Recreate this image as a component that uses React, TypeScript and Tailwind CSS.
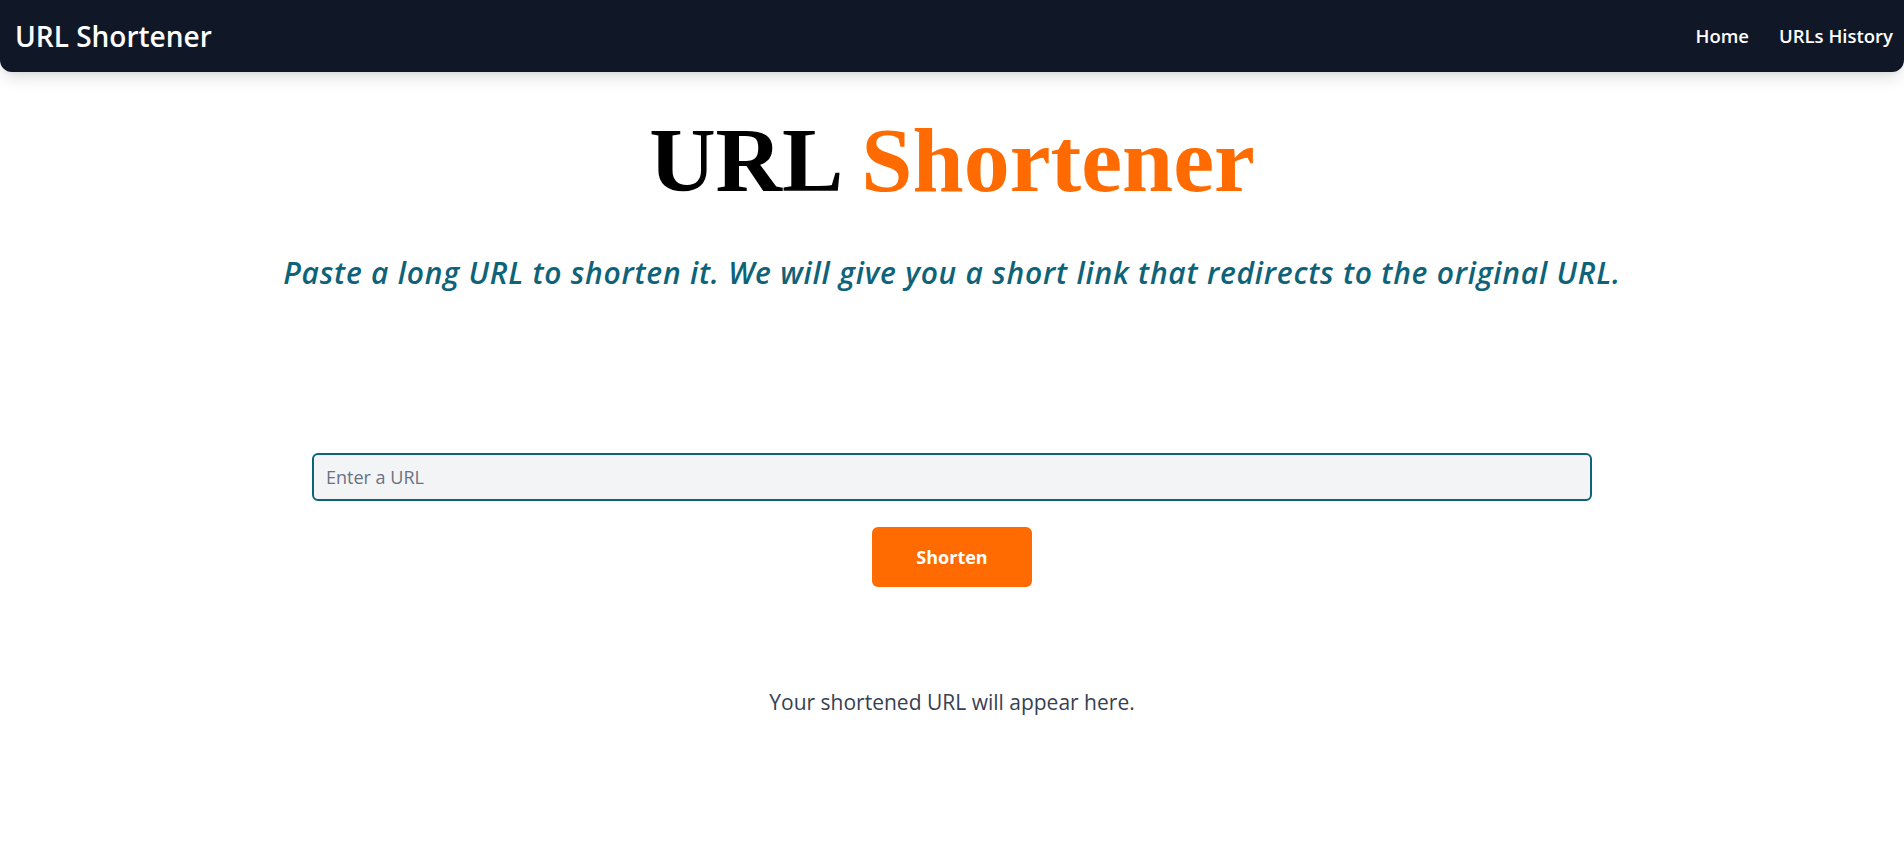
export default function App() {
  return (
    <div className="min-h-screen bg-white" style={{ fontFamily: '"Open Sans", "Noto Sans", sans-serif' }}>
      <nav className="flex h-[72px] items-center justify-between rounded-b-xl bg-gray-900 pl-[15px] pr-[11px] shadow-lg">
        <a href="#" className="text-[28px] font-semibold text-white">
          URL Shortener
        </a>
        <div className="flex items-center gap-[30px] text-[18.5px] font-semibold text-white">
          <a href="#">Home</a>
          <a href="#">URLs History</a>
        </div>
      </nav>

      <main className="flex flex-col items-center">
        <h1
          className="mt-[42px] text-[92px] font-bold leading-none"
          style={{ fontFamily: '"Liberation Serif", serif' }}
        >
          URL <span className="text-[#ff6b00]">Shortener</span>
        </h1>
        <p className="mt-[49px] text-3xl font-semibold italic tracking-wide text-[#0e6379]">
          Paste a long URL to shorten it. We will give you a short link that redirects to the original URL.
        </p>

        <div className="mt-[162px] flex w-full max-w-7xl flex-col items-center">
          <input
            type="text"
            placeholder="Enter a URL"
            className="h-[48px] w-full rounded-md border-2 border-[#0e6379] bg-gray-100 px-3 text-lg text-gray-800 placeholder:text-gray-500 focus:outline-none"
          />
          <button className="mt-[26px] h-[60px] w-[160px] rounded-md bg-[#ff6b00] text-lg font-bold text-white">
            Shorten
          </button>
        </div>

        <p className="mt-[100px] text-[21px] text-gray-700">Your shortened URL will appear here.</p>
      </main>
    </div>
  );
}
